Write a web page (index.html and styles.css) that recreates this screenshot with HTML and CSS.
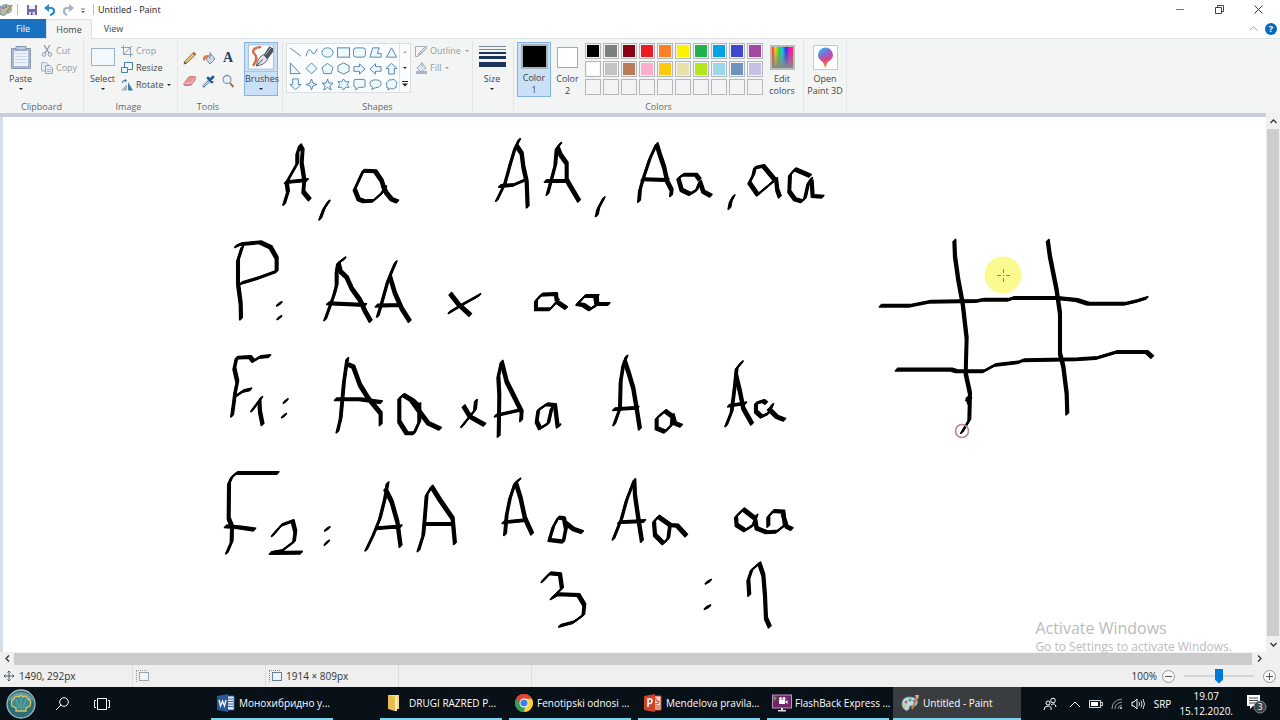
FILE: index.html
```html
<!DOCTYPE html>
<html lang="en">
<head>
<meta charset="utf-8">
<title>Untitled - Paint</title>
<link rel="stylesheet" href="styles.css">
</head>
<body>
<header class="titlebar">
  <svg class="app-icon" width="14" height="16" viewBox="0 0 14 16"><path d="M0 5Q5 1 10 4Q13 9 9 11Q6 10 5 13Q2 14 0 12Z" fill="#a9c3cf" stroke="#6f8b98"/><circle cx="3" cy="6" r="1.3" fill="#d8634f"/><circle cx="6" cy="5" r="1.2" fill="#4f9e68"/><circle cx="2" cy="10" r="1.3" fill="#e1b640"/><path d="M6 11L12 3" stroke="#c58a43" stroke-width="2"/></svg>
  <span class="divider"></span>
  <button class="quick" aria-label="Save"><svg width="12" height="12" viewBox="0 0 12 12"><path d="M1 1H11V11H1Z" fill="#7767ae"/><path d="M3 1H9V5H3Z" fill="#f4f2fa"/><path d="M3 8H9V11H3Z" fill="#d5cfe8"/><path d="M5 8.500H6.500V11H5Z" fill="#544586"/></svg></button>
  <button class="quick" aria-label="Undo"><svg width="12" height="12" viewBox="0 0 12 12"><path d="M2 4H7Q10 4 10 7Q10 10 6 11" fill="none" stroke="#2f8cc5" stroke-width="2.200"/><path d="M0 4L5 0V8Z" fill="#2f8cc5"/></svg></button>
  <button class="quick" aria-label="Redo"><svg width="12" height="12" viewBox="0 0 12 12"><path d="M10 4H5Q2 4 2 7Q2 10 5 11" fill="none" stroke="#a5b4c8" stroke-width="2.200"/><path d="M12 4L7 0V8Z" fill="#a5b4c8"/></svg></button>
  <button class="more" aria-label="Customize toolbar"><svg width="6" height="6" viewBox="0 0 6 6"><path d="M1 1H5" stroke="#777"/><path d="M1 3H5L3 5Z" fill="#555"/></svg></button>
  <span class="divider"></span>
  <h1 class="title">Untitled - Paint</h1>
  <div class="window-buttons">
    <button aria-label="Minimize"><svg width="9" height="9" viewBox="0 0 9 9"><path d="M0 4.500H8" stroke="#777"/></svg></button>
    <button aria-label="Restore"><svg width="9" height="9" viewBox="0 0 9 9"><path d="M.5 2.500H6.500V8.500H.5ZM2.500 2.500V.5H8.500V6.500H6.500" fill="none" stroke="#444"/></svg></button>
    <button aria-label="Close"><svg width="9" height="9" viewBox="0 0 9 9"><path d="M.5.5L8.500 8.500M8.500.5L.5 8.500" stroke="#333"/></svg></button>
  </div>
</header>
<nav class="tabs">
  <button class="tab tab-file">File</button>
  <button class="tab tab-active">Home</button>
  <button class="tab">View</button>
  <button class="collapse" aria-label="Collapse ribbon"><svg width="9" height="5" viewBox="0 0 9 5"><path d="M.5 4.500L4.500.8L8.500 4.500" fill="none" stroke="#aaa"/></svg></button>
  <button class="help" aria-label="Help">?</button>
</nav>
<section class="ribbon">
  <div class="group g-clipboard">
    <div class="tools-row">
      <button class="big paste">
        <svg width="22" height="25" viewBox="0 0 22 25"><path d="M1.500 3.500H20.500V23.500H1.500Z" fill="#a9b7d0" stroke="#8797b6"/><path d="M4 6H18V21H4Z" fill="#edf2fb"/><path d="M5 8.500H17M5 11.500H17M5 14.500H17M5 17.500H17" stroke="#cad5e8"/><path d="M6 1.500H16V5H6Z" fill="#bdc9dc" stroke="#8393b0"/></svg>
        <span>Paste</span><i class="arrow"></i></button>
      <div class="stack">
        <button class="small off"><svg width="12" height="12" viewBox="0 0 12 12"><path d="M3 0L8 8M9 0L4 8" stroke="#8e99aa" stroke-width="1.300"/><circle cx="3" cy="9.500" r="1.800" fill="none" stroke="#8e99aa"/><circle cx="9" cy="9.500" r="1.800" fill="none" stroke="#8e99aa"/></svg><span>Cut</span></button>
        <button class="small off"><svg width="12" height="12" viewBox="0 0 12 12"><path d="M.5.5H5L7.500 3V9H.5Z" fill="#e6ecf5" stroke="#a2afc4"/><path d="M4.500 3.500H9L11.500 6V11.500H4.500Z" fill="#e6ecf5" stroke="#94a4bd"/><path d="M6 7.500H10M6 9.500H10" stroke="#a9b8d0"/></svg><span>Copy</span></button>
      </div>
    </div>
    <div class="group-name">Clipboard</div>
  </div>
  <div class="group g-image">
    <div class="tools-row">
      <button class="big select">
        <svg width="24" height="25" viewBox="0 0 24 25"><rect x=".5" y="3.500" width="23" height="17" fill="#f3f8fd" stroke="#426f99" stroke-dasharray="1 1"/></svg>
        <span>Select</span><i class="arrow"></i></button>
      <div class="stack">
        <button class="small off"><svg width="12" height="12" viewBox="0 0 12 12"><path d="M2.500 0V9.500H12M0 2.500H9.500V12M3 9L11 1" fill="none" stroke="#91a0b8"/></svg><span>Crop</span></button>
        <button class="small"><svg width="12" height="12" viewBox="0 0 12 12"><path d="M3.500.5H11.500V7.500H3.500Z" fill="#eef7fd" stroke="#4180ac"/><path d="M.5 5.500H6.500V10.500H.5Z" fill="#eef7fd" stroke="#4180ac"/></svg><span>Resize</span></button>
        <button class="small"><svg width="12" height="12" viewBox="0 0 12 12"><path d="M0 11.500H6L6 5Z" fill="#a8b4bd"/><path d="M7 3L12 11.500H7Z" fill="#3b80ae"/><path d="M1 4Q1 1 5 1.500M3.500 0L5.500 1.500L3.500 3" fill="none" stroke="#3878a6"/></svg><span>Rotate</span><i class="arrow"></i></button>
      </div>
    </div>
    <div class="group-name">Image</div>
  </div>
  <div class="group g-tools">
    <div class="tool-grid">
      <button aria-label="Pencil"><svg width="14" height="14" viewBox="0 0 14 14"><path d="M3 11L12 2" stroke="#8d6b37" stroke-width="3.400"/><path d="M3 11L11 3" stroke="#f0c870" stroke-width="1.800"/><path d="M.5 13.500L1.500 10L4 12.500Z" fill="#555"/><path d="M10.500 2L12.500 4" stroke="#a15947" stroke-width="1.500"/></svg></button>
      <button aria-label="Fill with color"><svg width="14" height="14" viewBox="0 0 14 14"><path d="M4 8L9 3L13 8L8 13Z" fill="#cfdeef" stroke="#6c89ad"/><path d="M1 9Q0 4 6 4L8 5Q4 6 3 9Q2 11 1 9Z" fill="#ef7b38"/><path d="M8 8V1" stroke="#7288a5"/></svg></button>
      <button class="text-tool" aria-label="Text">A</button>
      <button aria-label="Eraser"><svg width="14" height="14" viewBox="0 0 14 14"><path d="M1 9L6 3Q7 2 13 3L12 6L8 11Q4 12 1 11Z" fill="#e6949a" stroke="#c76c74"/><path d="M1 9H8L13 3" fill="none" stroke="#f7c7c9"/></svg></button>
      <button aria-label="Color picker"><svg width="14" height="14" viewBox="0 0 14 14"><path d="M1 13L8 6" stroke="#6e8aa6" stroke-width="2.500"/><path d="M2 12L8 6" stroke="#e2eef8"/><path d="M6 4L10 8M8 6L11 3" stroke="#205b94" stroke-width="2.800" stroke-linecap="round"/></svg></button>
      <button aria-label="Magnifier"><svg width="14" height="14" viewBox="0 0 14 14"><circle cx="6" cy="5.500" r="4" fill="#e8f2fa" stroke="#8c9caf" stroke-width="1.300"/><path d="M9 9L12.500 13" stroke="#9c7959" stroke-width="2"/></svg></button>
    </div>
    <div class="group-name">Tools</div>
  </div>
  <div class="group g-brushes">
    <button class="big brushes pressed">
      <svg width="28" height="28" viewBox="0 0 30 29"><rect x="1.500" y="1.500" width="27" height="26" fill="#fafbfc" stroke="#a7bfd8"/><path d="M14 4Q5 5 7 10Q13 15 7 23" fill="none" stroke="#dc6741" stroke-width="2.500" stroke-linecap="round"/><path d="M10 24Q12 14 18 12L22 17Q19 23 10 24Z" fill="#e4e8ec" stroke="#4b5762"/><path d="M18 12L24 3L28 5V9L22 17Z" fill="#4b545e"/><path d="M20 12L26 4" stroke="#b8c1ca"/><path d="M10 24L17 17" stroke="#333"/></svg>
      <span>Brushes</span><i class="arrow"></i></button>
  </div>
  <div class="group g-shapes">
    <div class="tools-row">
      <div class="gallery">
        <div class="shape-grid">
          <svg class="shape" viewBox="0 0 14 14"><path d="M1 2L13 11"/></svg>
          <svg class="shape" viewBox="0 0 14 14"><path d="M1 11Q4 0 7 6T13 3"/></svg>
          <svg class="shape" viewBox="0 0 14 14"><ellipse cx="7" cy="7" rx="6" ry="5"/></svg>
          <svg class="shape" viewBox="0 0 14 14"><rect x=".5" y="2" width="13" height="10"/></svg>
          <svg class="shape" viewBox="0 0 14 14"><rect x=".5" y="2" width="13" height="10" rx="3"/></svg>
          <svg class="shape" viewBox="0 0 14 14"><path d="M4 2H11L9 8H13V12H1Z"/></svg>
          <svg class="shape" viewBox="0 0 14 14"><path d="M7 2L12.500 12H1.500Z"/></svg>
          <svg class="shape" viewBox="0 0 14 14"><path d="M1.500 1V12.500H12Z"/></svg>
          <svg class="shape" viewBox="0 0 14 14"><path d="M7 1L13 7L7 12.500L1 7Z"/></svg>
          <svg class="shape" viewBox="0 0 14 14"><path d="M7 1.500L13 6L11 12.500H3L1 6Z"/></svg>
          <svg class="shape" viewBox="0 0 14 14"><path d="M7 1L13 4V10L7 13L1 10V4Z"/></svg>
          <svg class="shape" viewBox="0 0 14 14"><path d="M1 5H7V2L13 7.500L7 13V10H1Z"/></svg>
          <svg class="shape" viewBox="0 0 14 14"><path d="M13 5H7V2L1 7.500L7 13V10H13Z"/></svg>
          <svg class="shape" viewBox="0 0 14 14"><path d="M4 13V7H1L7 1.500L13 7H10V13Z"/></svg>
          <svg class="shape" viewBox="0 0 14 14"><path d="M4 1V7H1L7 12.500L13 7H10V1Z"/></svg>
          <svg class="shape" viewBox="0 0 14 14"><path d="M7 1L8.500 5.500L13 7L8.500 8.500L7 13L5.500 8.500L1 7L5.500 5.500Z"/></svg>
          <svg class="shape" viewBox="0 0 14 14"><path d="M7 1L8.500 5.500H13L9.500 8.500L11 13L7 10.200L3 13L4.500 8.500L1 5.500H5.500Z"/></svg>
          <svg class="shape" viewBox="0 0 14 14"><path d="M7 1L9 4H13L11 7L13 10H9L7 13L5 10H1L3 7L1 4H5Z"/></svg>
          <svg class="shape" viewBox="0 0 14 14"><path d="M2.500 1.500H11.500Q13 1.500 13 3V8.500Q13 10 11.500 10H6L3 13V10Q1 10 1 8.500V3Q1 1.500 2.500 1.500Z"/></svg>
          <svg class="shape" viewBox="0 0 14 14"><path d="M4 10Q1 9 1 6Q1 2 7 2T13 6T7 10.500L3 12.500Z"/></svg>
          <svg class="shape" viewBox="0 0 14 14"><path d="M4 11Q1 11 2 8Q0 5 3 4Q4 1 7 2Q10 0 12 4Q14 6 12 8Q13 11 10 11Q8 13 6 11L3 13Z"/></svg>
        </div>
        <div class="gallery-nav">
          <button aria-label="Previous shapes"><i class="arrow arrow-up"></i></button>
          <button aria-label="Next shapes"><i class="arrow"></i></button>
          <button aria-label="All shapes"><svg width="6" height="6" viewBox="0 0 6 6"><path d="M0 .5H6" stroke="#222"/><path d="M0 2.500H6L3 5.500Z" fill="#222"/></svg></button>
        </div>
      </div>
      <div class="stack shape-opts">
        <button class="small off"><svg width="12" height="12" viewBox="0 0 12 12"><path d="M9.500 1.500H.5V11.500H3M5 10L12 2" fill="none" stroke="#a6adb8"/><path d="M3 11L4 8L11 1L12 3Z" fill="#e3e5ea" stroke="#9ba4b4"/></svg><span>Outline</span><i class="arrow"></i></button>
        <button class="small off"><svg width="12" height="12" viewBox="0 0 12 12"><path d="M1 9H12V12H1Z" fill="#a5b3cb"/><path d="M2 6L7 1L11 6L6 10Z" fill="#dfe5ee" stroke="#9eabc0"/><path d="M7 5V0" stroke="#94a2b8"/></svg><span>Fill</span><i class="arrow"></i></button>
      </div>
    </div>
    <div class="group-name">Shapes</div>
  </div>
  <div class="group g-size">
    <button class="big">
      <svg width="27" height="25" viewBox="0 0 27 25"><path d="M0 1.500H27M0 4.500H27" stroke="#7b8792"/><path d="M0 8H27" stroke="#1c3458" stroke-width="2"/><path d="M0 12.500H27" stroke="#1c3458" stroke-width="3"/><path d="M0 19.500H27" stroke="#1c3458" stroke-width="5"/></svg>
      <span>Size</span><i class="arrow"></i></button>
  </div>
  <div class="group g-colors">
    <div class="tools-row">
      <button class="big color-one pressed"><i class="well well-large black"></i><span>Color<br>1</span></button>
      <button class="big color-two"><i class="well white"></i><span>Color<br>2</span></button>
      <div class="palette">
        <button class="swatch c1" aria-label="Black"></button><button class="swatch c2" aria-label="Gray"></button><button class="swatch c3" aria-label="Dark red"></button><button class="swatch c4" aria-label="Red"></button><button class="swatch c5" aria-label="Orange"></button><button class="swatch c6" aria-label="Yellow"></button><button class="swatch c7" aria-label="Green"></button><button class="swatch c8" aria-label="Turquoise"></button><button class="swatch c9" aria-label="Indigo"></button><button class="swatch c10" aria-label="Purple"></button>
        <button class="swatch white" aria-label="White"></button><button class="swatch c12" aria-label="Light gray"></button><button class="swatch c13" aria-label="Brown"></button><button class="swatch c14" aria-label="Rose"></button><button class="swatch c15" aria-label="Gold"></button><button class="swatch c16" aria-label="Light yellow"></button><button class="swatch c17" aria-label="Lime"></button><button class="swatch c18" aria-label="Light turquoise"></button><button class="swatch c19" aria-label="Blue gray"></button><button class="swatch c20" aria-label="Lavender"></button>
        <button class="swatch" aria-label="Custom 1"></button><button class="swatch" aria-label="Custom 2"></button><button class="swatch" aria-label="Custom 3"></button><button class="swatch" aria-label="Custom 4"></button><button class="swatch" aria-label="Custom 5"></button><button class="swatch" aria-label="Custom 6"></button><button class="swatch" aria-label="Custom 7"></button><button class="swatch" aria-label="Custom 8"></button><button class="swatch" aria-label="Custom 9"></button><button class="swatch" aria-label="Custom 10"></button>
      </div>
      <button class="big edit edit-colors"><i class="rainbow"></i><span>Edit<br>colors</span></button>
    </div>
    <div class="group-name">Colors</div>
  </div>
  <div class="group g-3d">
    <button class="big edit">
      <svg width="25" height="25" viewBox="0 0 25 25"><defs><linearGradient id="drop" x1="0" y1="0" x2=".4" y2="1"><stop stop-color="#29c3ec"/><stop offset=".4" stop-color="#7a72dc"/><stop offset=".7" stop-color="#e3417d"/><stop offset="1" stop-color="#f7a12b"/></linearGradient></defs><rect x=".5" y=".5" width="24" height="24" fill="#fff" stroke="#c3c8ce"/><path d="M12 23L10 17Q5 14 5 10A7 7 0 0 1 20 10Q20 14 15 17Z" fill="url(#drop)"/><path d="M13 4A7 7 0 0 1 17 15Q18 8 13 4Z" fill="#b64fc8"/></svg>
      <span>Open<br>Paint 3D</span></button>
  </div>
</section>
<main class="workspace">
  <div class="canvas">
    <svg class="drawing" aria-label="Drawing">
      <defs>
        <g id="ink">
          <g transform="translate(210 130) scale(.3333)">
            <path d="M222 224L234 185L230 157L262 100L262 70L270 46L278 60L275 100L283 150L280 185L300 210M225 157L293 150M330 268L342 236L357 213"/>
            <path d="M522 174L515 152L496 124L460 122L434 178L446 208L462 214L490 212L515 190L527 170M518 165L530 190L545 208L564 215"/>
            <path d="M97 350L84 390L84 460L92 520L93 568M76 350L90 343L150 337L182 352L200 384L200 424L145 444L92 460M202 525L214 518M203 566L213 560"/>
            <path d="M345 570L372 495L380 465L380 425L384 400L405 384M386 400L392 425L410 442L425 475L450 510L466 545L483 575M352 520L468 525"/>
            <path d="M503 560L515 520L533 455L545 425L558 395M540 440L555 490L575 535L600 575M498 527L572 525M720 490L745 522L782 556M717 548L760 522L800 500L810 494"/>
          </g>
          <g transform="translate(490 130) scale(.3333)">
            <path d="M20 212L45 160L60 105L75 55L88 28M78 45L95 70L100 110L110 155L113 232M28 168L70 165L105 150"/>
            <path d="M172 194L184 150L196 105L200 55L212 40M202 50L212 75L230 100L230 150L268 214M165 153L235 153M320 258L325 235L342 203"/>
            <path d="M447 215L450 180L460 145L480 85L500 42L510 75L522 110L532 155L545 180L543 198M455 148L535 150"/>
            <path d="M630 150L618 134L580 134L565 145L575 180L600 192L620 180L630 155L640 185L664 198M718 236L722 215L732 197"/>
            <path d="M855 150L820 108L795 113L790 135L778 158L803 194L855 150M858 145L862 180L870 202M962 138L915 118L900 135L898 185L915 208L935 214L945 205L955 160L965 145M965 152L968 198L1000 200"/>
            <path d="M200 510L198 492L155 494L138 512L138 538L180 538L205 510M200 515L230 535M325 498L285 498L262 522L280 525L300 538L320 525L316 500M320 500L322 522L358 522"/>
          </g>
          <g transform="translate(210 345) scale(.3333)">
            <path d="M66 214L72 170L75 145L82 110L73 70L80 38L120 36L130 48L150 36L180 33M75 155L100 138L123 133M125 198L155 157M148 165L150 200L158 240M222 172L232 164M217 216L227 208"/>
            <path d="M382 262L392 220L402 110L412 40M413 58L430 65L450 120L475 160L512 205L512 240M375 163L450 163L515 172"/>
            <path d="M628 185L610 168L580 150L568 160L568 230L590 265L612 265L628 230L628 175M600 160L625 195L655 235L692 252M760 182L780 215L825 240M755 245L795 195L798 165"/>
            <path d="M50 625L65 590L66 545L56 520L57 415L65 397L80 384L205 384M45 544L85 547L135 554M187 572L215 540L248 528L256 560L252 590L215 618L182 624L275 623M346 555L358 548M345 598L356 588"/>
            <path d="M468 616L490 570L510 520L525 460L533 413M525 430L545 470L562 530L572 605M500 550L574 544M625 618L640 570L646 500L650 450L665 425L690 465L728 520L735 597M640 537L730 537"/>
          </g>
          <g transform="translate(490 345) scale(.3333)">
            <path d="M26 275L28 150L25 95L35 50L50 110L85 180L95 200L93 228M15 212L90 195M192 180L170 178L145 195L140 230L150 250L175 235L185 190L195 180L203 245L210 240"/>
            <path d="M372 240L390 190L392 110L400 60L410 33M403 45L415 80L430 130L440 190L450 253M370 193L445 188M548 215L525 198L500 220L500 250L525 260L545 240L548 210L555 235L575 243"/>
            <path d="M708 243L725 200L735 120L740 70L757 50M738 90L750 140L760 190L787 238M715 182L768 175M830 175L820 168L798 175L798 200L815 215L835 205L848 178M835 190L860 215L885 225"/>
            <path d="M45 570L50 510L60 460L75 415L90 402M78 415L92 460L105 520L127 568M38 532L110 525M222 520L205 518L190 545L178 585L220 590L228 550L222 520M222 530L250 552L278 562"/>
            <path d="M370 583L395 520L410 465L433 405L435 450L445 520L456 590M385 532L465 528M540 540L505 515L492 530L495 570L520 595L535 580L540 540L562 542L590 573"/>
            <path d="M795 520L760 493L738 515L740 540L765 556L790 540L800 510M795 520L800 550L830 562L860 560L885 540L880 500L850 498L835 515L835 545M878 505L890 545L907 553"/>
            <path d="M156 710L180 685L210 688L216 730L185 760L205 748L265 750L283 780L280 810L250 832L208 843M648 714L662 706M645 790L660 783M778 752L775 705L785 675L808 655L820 690L825 750L828 820L840 847"/>
          </g>
          <g transform="translate(870 230) scale(.3333)">
            <path d="M253 30L255 80L265 150L278 220L290 325L287 430L300 490L298 570L275 608M292 500L298 520M289 508L303 508M533 30L540 80L560 180L570 250L570 370L580 410L590 490L592 553"/>
            <path d="M30 227L120 227L180 215L320 213L340 209L415 209L430 204L560 204L620 210L655 221L765 221L800 213L832 203M78 419L245 419L260 424L340 424L375 405L445 397L460 391L620 388L680 384L740 366L830 366L848 382"/>
          </g>
        </g>
      </defs>
      <g transform="translate(-3 -117)">
        <circle cx="1003" cy="275" r="18.500" fill="#fafa91"/>
        <g class="ink">
          <use href="#ink" x="-1.200" y="1.200"/><use href="#ink" x="-.6" y=".6"/><use href="#ink"/><use href="#ink" x=".6" y="-.6"/><use href="#ink" x="1.200" y="-1.200"/>
        </g>
        <circle cx="962" cy="431" r="6.500" fill="none" stroke="#b98791" stroke-width="1.600"/>
        <path d="M997 275.500H1001M1006 275.500H1010M1003.500 269V273M1003.500 278V282M1003 275.500H1004" stroke="#8a8a55"/>
      </g>
    </svg>
  </div>
  <div class="vscroll">
    <button aria-label="Scroll up"><svg width="7" height="5" viewBox="0 0 7 5"><path d="M.5 4L3.500 1L6.500 4" fill="none" stroke="#333" stroke-width="1.300"/></svg></button>
    <div class="vthumb"></div>
    <button aria-label="Scroll down"><svg width="7" height="5" viewBox="0 0 7 5"><path d="M.5 1L3.500 4L6.500 1" fill="none" stroke="#333" stroke-width="1.300"/></svg></button>
  </div>
  <div class="watermark"><p class="wm-title">Activate Windows</p><p class="wm-text">Go to Settings to activate Windows.</p></div>
</main>
<div class="hscroll">
  <button aria-label="Scroll left"><svg width="5" height="7" viewBox="0 0 5 7"><path d="M4 .5L1 3.500L4 6.500" fill="none" stroke="#333" stroke-width="1.300"/></svg></button>
  <div class="hthumb"></div>
  <button aria-label="Scroll right"><svg width="5" height="7" viewBox="0 0 5 7"><path d="M1 .5L4 3.500L1 6.500" fill="none" stroke="#333" stroke-width="1.300"/></svg></button>
</div>
<footer class="status">
  <div class="cell"><svg width="12" height="12" viewBox="0 0 12 12"><path d="M6 1V11M1 6H11M4.500 2.500L6 1L7.500 2.500M4.500 9.500L6 11L7.500 9.500M2.500 4.500L1 6L2.500 7.500M9.500 4.500L11 6L9.500 7.500" fill="none" stroke="#4b5a68"/></svg><span>1490, 292px</span></div>
  <div class="cell"><svg width="13" height="12" viewBox="0 0 13 12"><path d="M0 .5H12M.5 1V12" stroke="#999" stroke-dasharray="1 1"/><rect x="3.500" y="2.500" width="9" height="8" fill="#f2f4f6" stroke="#9ca5ab"/></svg></div>
  <div class="cell"><svg width="13" height="12" viewBox="0 0 13 12"><path d="M0 .5H12M.5 1V12" stroke="#888" stroke-dasharray="1 1"/><rect x="3.500" y="2.500" width="9" height="8" fill="#e8f4fc" stroke="#6b7f8c"/></svg><span>1914 × 809px</span></div>
  <div class="cell"></div>
  <div class="zoom">
    <label for="zoom">100%</label>
    <button class="round" aria-label="Zoom out"><svg width="7" height="7" viewBox="0 0 7 7"><path d="M0 3.500H7" stroke="#555"/></svg></button>
    <input id="zoom" class="slider" type="range" min="0" max="100" value="50">
    <button class="round" aria-label="Zoom in"><svg width="7" height="7" viewBox="0 0 7 7"><path d="M0 3.500H7M3.500 0V7" stroke="#555"/></svg></button>
  </div>
</footer>
<footer class="taskbar">
  <button class="start" aria-label="Start"><svg width="30" height="30" viewBox="0 0 30 30"><circle cx="15" cy="15" r="14" fill="#2e6d76" stroke="#9bbcc2" stroke-width="1.300"/><path d="M2 12A14 14 0 0 1 28 12Q15 5 2 12Z" fill="#6b9ca0"/><path d="M10 22H20V19L24 17Q26 11 22 10Q20 6 17 8Q15 5 13 8Q9 6 8 10Q4 11 6 17L10 19Z" fill="#3e8d91" stroke="#d9c35c" stroke-width="1.300"/><path d="M15 20V9M13 19L10 10M17 19L20 10" stroke="#62a9a8"/></svg></button>
  <button class="task-icon" aria-label="Search"><svg width="16" height="16" viewBox="0 0 16 16"><circle cx="10" cy="6" r="4.300" fill="none" stroke="#fff"/><path d="M7 9L2 14" stroke="#fff"/></svg></button>
  <button class="task-icon" aria-label="Task view"><svg width="18" height="16" viewBox="0 0 18 16"><path d="M4.500 2.500H13.500V13.500H4.500ZM3 4.500H1.500V11.500H3M15 4.500H16.500V11.500H15" fill="none" stroke="#fff"/></svg></button>
  <div class="apps">
    <button class="app first"><svg width="18" height="18" viewBox="0 0 18 18"><path d="M9 2H17V16H9Z" fill="#eaf0fa" stroke="#2f5da5"/><path d="M11 5H16M11 7.500H16M11 10H16M11 12.500H16" stroke="#2f5da5"/><path d="M0 2L11 0V18L0 16Z" fill="#2b579a"/><path d="M2 6L3.500 12L5.500 7L7.500 12L9 6" fill="none" stroke="#fff" stroke-width="1.300"/></svg><span>Монохибридно у...</span></button>
    <button class="app second"><svg width="18" height="18" viewBox="0 0 18 18"><path d="M3 1H14V15H3Z" fill="#f9dc82"/><path d="M3 1L10 3V17L3 15Z" fill="#e8bd4f"/><path d="M10 3H12V17H10Z" fill="#fff0b6"/></svg><span>DRUGI RAZRED P...</span></button>
    <button class="app"><svg width="18" height="18" viewBox="0 0 18 18"><path d="M9 9L1.200 4.500A9 9 0 0 1 16.800 4.500Z" fill="#df4637"/><path d="M9 9L16.800 4.500A9 9 0 0 1 9 18Z" fill="#fbd13d"/><path d="M9 9L9 18A9 9 0 0 1 1.200 4.500Z" fill="#2f9f58"/><path d="M9 4.500H16.800L12 12L9 18" fill="#fbd13d"/><path d="M1.200 4.500L5 11L9 9L9 4.500H16.800A9 9 0 0 0 1.200 4.500" fill="#df4637"/><path d="M1.200 4.500L5.500 12L10 13L9 18A9 9 0 0 1 1.200 4.500" fill="#2f9f58"/><circle cx="9" cy="9" r="4.500" fill="#fff"/><circle cx="9" cy="9" r="3.600" fill="#3f80e8"/></svg><span>Fenotipski odnosi ...</span></button>
    <button class="app"><svg width="18" height="18" viewBox="0 0 18 18"><path d="M9 2H17V16H9Z" fill="#f7ded7" stroke="#c94225"/><path d="M12 4V7H15A3 3 0 1 1 12 4M11 12H16M11 14H16" fill="none" stroke="#c94225"/><path d="M0 2L11 0V18L0 16Z" fill="#cc4328"/><path d="M4 13V5H6.500Q8 5 8 7T6.500 9.500H4" fill="none" stroke="#fff" stroke-width="1.600"/></svg><span>Mendelova pravila...</span></button>
    <button class="app flashback"><svg width="20" height="18" viewBox="0 0 20 18"><rect x=".5" y="1" width="19" height="13" fill="#72246b" stroke="#c48fc2"/><path d="M9 14H11V16H14V17.500H6V16H9Z" fill="#e8d9ea"/><rect x="7" y="6" width="6" height="4" fill="#fff"/><circle cx="8.500" cy="4.500" r="1.500" fill="#fff"/><circle cx="12" cy="4.500" r="1.500" fill="#fff"/><path d="M13 8L15.500 6V10Z" fill="#fff"/><path d="M1.500 2L5 4L2 7Z" fill="#65a955"/></svg><span>FlashBack Express ...</span></button>
    <button class="app current"><svg width="20" height="18" viewBox="0 0 20 18"><path d="M1 10Q1 3 9 3Q18 4 16 10Q15 13 11 12Q8 11 8 15Q6 18 3 15Q1 13 1 10Z" fill="#b9dbe8" stroke="#75a2b6"/><circle cx="5" cy="8" r="1.500" fill="#d95346"/><circle cx="9" cy="6" r="1.500" fill="#49a463"/><circle cx="4" cy="12" r="1.500" fill="#e8bd37"/><circle cx="13" cy="7" r="1.300" fill="#477fc7"/><path d="M11 15L16 4" stroke="#c5813d" stroke-width="2"/><path d="M14 1H18L17 5L15 4Z" fill="#e5ac67"/></svg><span>Untitled - Paint</span></button>
  </div>
  <div class="tray">
    <svg width="14" height="14" viewBox="0 0 14 14"><circle cx="5" cy="6" r="2" fill="none" stroke="#fff"/><path d="M1 13Q1 9 5 9T8 13" fill="none" stroke="#fff"/><circle cx="10" cy="3.500" r="2.300" fill="none" stroke="#fff"/><path d="M8 8Q12 5 13 10" fill="none" stroke="#fff"/></svg>
    <svg class="chev" width="12" height="8" viewBox="0 0 12 8"><path d="M1 7L6 2L11 7" fill="none" stroke="#fff"/></svg>
    <svg width="14" height="10" viewBox="0 0 14 10"><path d="M.5 1.500H11.500V8.500H.5ZM12 3.500H13.500V6.500H12" fill="none" stroke="#ddd"/><path d="M2 3H9V7H2Z" fill="#fff"/></svg>
    <svg width="12" height="12" viewBox="0 0 12 12"><path d="M1 11Q1 2 11 1M4 11Q4 5 11 4M7 11Q7 8 11 7" fill="none" stroke="#999"/><circle cx="10" cy="10" r="1" fill="#eee"/></svg>
    <svg width="15" height="12" viewBox="0 0 15 12"><path d="M1 4H3L6 1V11L3 8H1Z" fill="none" stroke="#fff"/><path d="M8 4Q9 6 8 8M10 2.500Q12 6 10 9.500M12 1Q15 6 12 11" fill="none" stroke="#ddd"/></svg>
    <span>SRP</span>
    <div class="clock">19.07<br>15.12.2020.</div>
    <svg class="notices" width="21" height="21" viewBox="0 0 21 21"><path d="M1 2H14V13H7L4 16V13H1Z" fill="#fff"/><path d="M3 5H12M3 7.500H12M3 10H12" stroke="#444"/><circle cx="14" cy="14" r="6" fill="#3b3f42" stroke="#81888c"/><text class="badge" x="14" y="17">3</text></svg>
  </div>
</footer>
</body>
</html>
```

FILE: styles.css
```css
* { box-sizing: border-box; }
body { margin: 0; height: 100vh; display: flex; flex-direction: column; overflow: hidden; background: #fff; color: #444; font: 9px/12px "Open Sans", "Noto Sans", sans-serif; }
button { margin: 0; padding: 0; border: 0; background: none; font: inherit; color: inherit; }
svg { display: block; flex: none; }
h1, p { margin: 0; font-weight: 400; }

.titlebar { height: 19px; flex: none; display: flex; align-items: center; color: #222; }
.divider { width: 1px; height: 11px; background: #bbb; margin: 0 8px 0 3px; }
.quick { margin-right: 6px; }
.more { margin: 2px 4px 0 0; }
.title { font-size: 9px; line-height: 12px; margin-left: -4px; }
.window-buttons { margin-left: auto; display: flex; gap: 30px; padding-right: 17px; }

.tabs { height: 20px; flex: none; display: flex; align-items: stretch; border-bottom: 1px solid #dfe2e4; }
.tab { width: 46px; font-size: 9px; }
.tab-file { background: #1a71c2; color: #fff; }
.tab-active { background: #f4f6f6; border: 1px solid #dfe2e4; border-bottom: 0; margin-bottom: -1px; }
.tab:nth-child(3) { width: 43px; }
.collapse { margin-left: auto; padding-right: 7px; }
.help { width: 12px; height: 12px; margin: 4px 3px 0 0; border-radius: 50%; background: #0869b9; color: #fff; font-weight: 700; line-height: 12px; }

.ribbon { height: 74px; flex: none; display: flex; background: #f3f5f5; padding-top: 2px; }
.group { display: flex; flex-direction: column; border-right: 1px solid #e3e6e8; flex: none; }
.group-name { text-align: center; margin-top: auto; color: #666; }
.g-clipboard { width: 84px; }
.g-image { width: 94px; }
.g-image .group-name { padding-right: 4px; }
.g-tools { width: 63px; border-right: 0; padding-right: 3px; }
.g-brushes { width: 42px; }
.g-shapes { width: 190px; }
.g-size { width: 41px; align-items: center; padding-right: 2px; }
.g-colors { width: 290px; }
.g-3d { width: 43px; align-items: center; }
.tools-row { display: flex; }
.big { display: flex; flex-direction: column; align-items: center; padding-top: 4px; }
.big > span { margin-top: 3px; line-height: 12px; white-space: nowrap; }
.arrow { border: 3px solid transparent; border-top-color: #222; border-bottom: 0; flex: none; }
.arrow-up { border-bottom: 3px solid #aaa; border-top: 0; }
.big .arrow { margin-top: 3px; border-width: 2px; border-bottom: 0; }
.paste { width: 41px; }
.select { width: 37px; }
.stack { display: flex; flex-direction: column; gap: 5px; padding-top: 4px; }
.small { height: 12px; display: flex; align-items: center; gap: 3px; white-space: nowrap; }
.small .arrow { margin-left: 1px; border-width: 2px; border-bottom: 0; }
.off { color: #999; }
.off .arrow { border-top-color: #999; }
.tool-grid { display: grid; grid-template-columns: repeat(3, 14px); gap: 9px 5px; padding: 10px 0 0 5px; }
.text-tool { font: 700 14px/14px "Liberation Serif", serif; color: #233f65; }
.pressed { background: #c9e0f7; border: 1px solid #86b3df; }
.brushes { width: 34px; height: 54px; margin: 1px 0 0 3px; padding-top: 0; }
.brushes > span { border-top: 1px solid #a4c7e8; margin-top: 0; width: 100%; padding-top: 1px; }
.gallery { display: flex; width: 125px; height: 50px; margin: 2px 0 0 3px; border: 1px solid #d9dde1; background: #fbfcfd; }
.shape-grid { display: grid; grid-template-columns: repeat(7, 16px); grid-template-rows: repeat(3, 16px); flex: 1; justify-items: center; align-items: center; }
.shape { width: 13px; height: 13px; fill: #eff8fd; stroke: #4c82a6; }
.gallery-nav { width: 12px; display: grid; grid-template-rows: repeat(3, 1fr); justify-items: center; align-items: center; border-left: 1px solid #dde0e3; }
.gallery-nav .arrow { display: block; border-width: 2px; }
.gallery-nav .arrow:not(.arrow-up) { border-bottom: 0; }
.gallery-nav .arrow-up { border-top: 0; }
.shape-opts { padding-left: 4px; }

.well { width: 21px; height: 21px; margin: 2px 0; border: 1px solid #aaa; }
.well-large { width: 27px; height: 27px; margin: 0; border: 2px solid #aab2ba; }
.black { background: #000; }
.white { background: #fff; }
.color-one { width: 34px; height: 55px; margin: 1px 0 0 3px; padding-top: 1px; }
.color-two { width: 33px; }
.palette { display: grid; grid-template-columns: repeat(10, 16px); grid-auto-rows: 16px; gap: 2px; padding: 2px 0 0 1px; }
.swatch { border: 1px solid #b4b8bb; box-shadow: inset 0 0 0 1px #f3f5f5; }
.c1 { background-color: #000; } .c2 { background-color: #7f7f7f; } .c3 { background-color: #880015; } .c4 { background-color: #ed1c24; } .c5 { background-color: #ff7f27; } .c6 { background-color: #fff200; } .c7 { background-color: #22b14c; } .c8 { background-color: #00a2e8; } .c9 { background-color: #3f48cc; } .c10 { background-color: #a349a4; }
.c12 { background-color: #c3c3c3; } .c13 { background-color: #b97a57; } .c14 { background-color: #ffaec9; } .c15 { background-color: #ffc90e; } .c16 { background-color: #e8e0aa; } .c17 { background-color: #b5e61d; } .c18 { background-color: #99d9ea; } .c19 { background-color: #7092be; } .c20 { background-color: #c8bfe7; }
.edit { width: 34px; }
.edit-colors { margin-left: 2px; }
.rainbow { width: 25px; height: 25px; border: 2px solid #bbb; background: linear-gradient(to bottom, transparent, #888), linear-gradient(to right, #f22, #fd0, #2d3, #0cf, #22e, #f0d, #f24); }

.workspace { flex: 1; min-height: 0; display: flex; position: relative; border-top: 4px solid #c6cddf; }
.canvas { flex: 1; min-width: 0; border-left: 3px solid #d5dde9; }
.drawing { width: 100%; height: 100%; }
.ink { fill: none; stroke: #000; stroke-width: 5px; stroke-linejoin: round; stroke-linecap: butt; }
.vscroll { width: 14px; flex: none; display: flex; flex-direction: column; align-items: center; background: #f0f0f0; margin-top: -4px; }
.vscroll button { height: 16px; flex: none; }
.vthumb { width: 12px; flex: 1; background: #cdcdcd; }
.watermark { position: absolute; right: 48px; bottom: -3px; color: #bbb; }
.wm-title { font-size: 16px; line-height: 22px; }
.wm-text { font-size: 12px; line-height: 16px; }
.hscroll { height: 13px; flex: none; display: flex; align-items: center; background: #f0f0f0; padding-right: 14px; }
.hscroll button { width: 14px; display: flex; justify-content: center; }
.hthumb { flex: 1; height: 12px; background: #cbcbcb; }

.status { height: 22px; flex: none; display: flex; background: #efefef; color: #333; font-size: 10px; }
.cell { width: 133px; display: flex; align-items: center; gap: 4px; padding-left: 3px; border-right: 1px solid #ddd; }
.zoom { margin-left: auto; display: flex; align-items: center; gap: 5px; padding-right: 4px; }
.round { width: 13px; height: 13px; display: grid; place-items: center; border: 1px solid #999; border-radius: 50%; background: #f8f8f8; }
.slider { appearance: none; width: 78px; height: 16px; margin: 0; background: linear-gradient(#d5d5d5, #d5d5d5) center / 70px 2px no-repeat; }
.slider::-webkit-slider-thumb { appearance: none; width: 8px; height: 15px; background: #0078d7; clip-path: polygon(0 0, 100% 0, 100% 75%, 50% 100%, 0 75%); }

.taskbar { height: 33px; flex: none; display: flex; align-items: stretch; background: #071117; color: #fff; font-size: 10px; }
.start { padding-left: 6px; width: 42px; display: flex; align-items: center; }
.task-icon { width: 40px; display: grid; place-items: center; }
.apps { display: flex; gap: 7px; padding-left: 89px; }
.app { width: 122px; display: flex; align-items: center; gap: 4px; padding-left: 6px; border-bottom: 2px solid #78d5ed; white-space: nowrap; }
.second { margin-left: 40px; padding-left: 5px; gap: 6px; }
.flashback { padding-left: 5px; gap: 3px; }
.current { width: 128px; margin-left: -3px; padding-left: 8px; gap: 2px; background: #3a3d40; }
.tray { display: flex; align-items: center; gap: 8px; margin-left: auto; padding-right: 13px; }
.chev { margin-left: 4px; }
.clock { text-align: center; line-height: 15px; }
.notices { margin-left: 5px; }
.badge { font: 9px "Open Sans", sans-serif; fill: #fff; text-anchor: middle; }
```
